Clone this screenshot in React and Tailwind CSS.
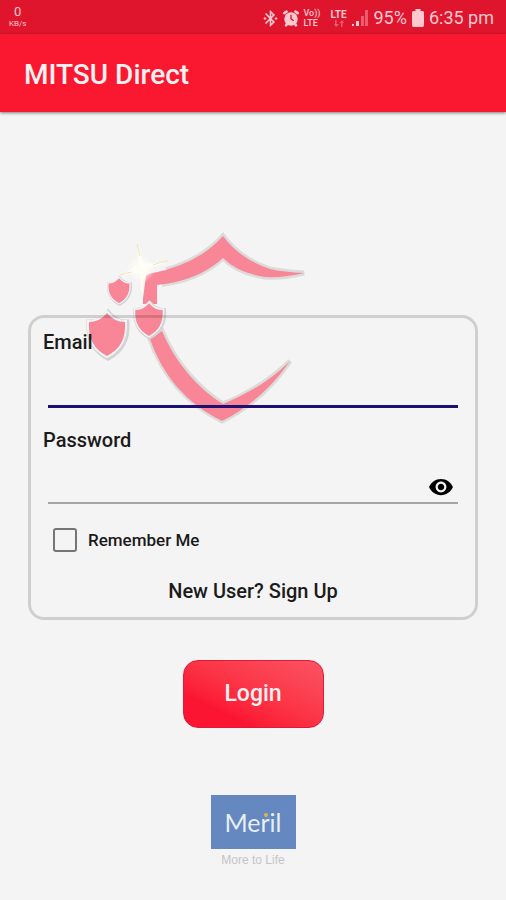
import { MdBluetoothConnected, MdVisibility } from "react-icons/md";

const SHIELD = "M0 -22 C5 -16 11 -13 18 -13 C19 4 13 14 0 21 C-13 14 -19 4 -18 -13 C-11 -13 -5 -16 0 -22Z";

const WING_TOP =
  "M143 304 L143 281 Q144 274 153 273 Q198 264 223 236 Q240 259 270 269 Q284 272 304 273 Q284 278 265 277 Q238 273 223 258 Q198 281 157 285 L157 304Z";
const WING_BOTTOM =
  "M150 339 C163 376 186 403 222 421 C246 409 270 390 290 361 C269 382 247 394 223 404 C199 389 176 364 162 331Z";

function SmallShield({ transform }) {
  return (
    <g transform={transform}>
      <path d={SHIELD} transform="translate(1 1)" fill="#d3d3d3" stroke="#d3d3d3" strokeWidth="7" strokeMiterlimit="3" />
      <path d={SHIELD} fill="#f4f4f4" stroke="#f4f4f4" strokeWidth="4" />
      <path d={SHIELD} fill="#f98697" />
    </g>
  );
}

function Emblem() {
  return (
    <svg
      viewBox="75 220 240 215"
      aria-hidden="true"
      className="pointer-events-none absolute top-[-95px] left-[75px] h-[215px] w-[240px]"
    >
      <defs>
        <radialGradient id="glow">
          <stop offset="0" stopColor="#fffef6" />
          <stop offset="0.5" stopColor="#fffef6" stopOpacity="0.6" />
          <stop offset="1" stopColor="#fffef6" stopOpacity="0" />
        </radialGradient>
      </defs>
      <g fill="#dbdbd9" stroke="#dbdbd9" strokeWidth="5" strokeLinejoin="miter" strokeMiterlimit="4">
        <path d={WING_TOP} />
        <path d={WING_BOTTOM} />
      </g>
      <path d="M136 308 L137 272 Q150 266 166 268 L162 286 L161 308Z" fill="#f4f4f4" />
      <g fill="#f98697">
        <path d={WING_TOP} />
        <path d={WING_BOTTOM} />
      </g>
      <SmallShield transform="translate(119 291) scale(0.58)" />
      <SmallShield transform="translate(107 335)" />
      <SmallShield transform="translate(149 320) scale(0.76)" />
      <circle cx="141" cy="269" r="14" fill="url(#glow)" />
      <path
        d="M137 244 Q141 256 144 264 Q156 263 169 261 Q156 266 147 270 Q145 282 143 299 Q140 284 140 273 Q130 274 119 275 Q130 270 138 266 Q138 256 137 244Z"
        fill="#fffef4"
        fillOpacity="0.9"
      />
      <path d="M137 244 Q138 250 140 256 M168 261 Q160 262 153 265 M120 275 Q125 273 132 272" fill="none" stroke="#f1e4ba" strokeWidth="1" />
    </svg>
  );
}

function StatusBar() {
  return (
    <div className="flex h-[34px] items-center bg-[#df152e] pr-3 pl-[9px] text-[#ffc9cf]">
      <div className="flex flex-col items-center">
        <span className="text-[13px] leading-[14px]">0</span>
        <span className="text-[8px] leading-[10px]">KB/s</span>
      </div>
      <div className="ml-auto flex items-center pt-[2px]">
        <MdBluetoothConnected className="size-[19px]" />
        <svg viewBox="0 0 20 20" className="ml-[2px] size-[18px]" aria-hidden="true">
          <circle cx="10" cy="11" r="7.5" fill="currentColor" />
          <path d="M2.500 4.500L5 3M17.500 4.500L15 3M4.500 18L6 16M15.500 18L14 16" stroke="currentColor" strokeWidth="3" strokeLinecap="round" />
          <path d="M10 6.500V11L13 13" fill="none" stroke="#df152e" strokeWidth="1.500" />
        </svg>
        <div className="ml-1 flex w-[20px] flex-col text-[9px] leading-[10px] font-medium">
          <span>Vo))</span>
          <span>LTE</span>
        </div>
        <div className="ml-[5px] flex w-[20px] flex-col items-center text-[10px] leading-[11px] font-bold">
          <span>LTE</span>
          <svg viewBox="0 0 10 7" className="h-[7px] w-[10px] opacity-40" aria-hidden="true">
            <path d="M2.500 0V4H5L2 7L0 4H1V0ZM7 7V3H5.500L8 0L10 3H8.500V7Z" fill="currentColor" />
          </svg>
        </div>
        <svg viewBox="0 0 18 18" className="ml-[2px] size-[18px]" aria-hidden="true">
          <path d="M1 15h2v2H1zM5 12h3v5H5z" fill="currentColor" />
          <path d="M10 7h3v10h-3zM14 1h3v16h-3z" fill="currentColor" opacity="0.4" />
        </svg>
        <span className="ml-[5px] text-[18px] leading-[20px]">95%</span>
        <svg viewBox="0 0 12 18" className="mx-[5px] h-[18px] w-[12px]" aria-hidden="true">
          <path d="M3.500 0H8.500V2H10.500Q12 2 12 3.500V16Q12 18 10.500 18H1.500Q0 18 0 16V3.500Q0 2 1.500 2H3.500Z" fill="currentColor" />
        </svg>
        <span className="text-[18px] leading-[20px]">6:35 pm</span>
      </div>
    </div>
  );
}

export default function App() {
  return (
    <div className="min-h-screen bg-[#f4f4f4] font-[Roboto,'Liberation_Sans',sans-serif] text-[#1b1b1b]">
      <StatusBar />
      <header className="flex h-[78px] items-center bg-[#fa1831] px-6 pt-1 shadow-[0_1px_3px_rgba(0,0,0,0.5)]">
        <h1 className="text-[28px] leading-[32px] font-medium text-[#fff1f2]">MITSU Direct</h1>
      </header>

      <main className="flex flex-col items-center pt-[203px] pb-8">
        <form className="flex w-full flex-col items-center" onSubmit={(e) => e.preventDefault()}>
          <div className="relative w-full px-7">
            <Emblem />
            <div className="relative rounded-[16px] border-[3px] border-black/15 px-3 pt-3 pb-[14px]">
              <label htmlFor="email" className="block text-[20px] leading-[24px] font-medium">
                Email
              </label>
              <div className="mx-[5px]">
                <input
                  id="email"
                  type="email"
                  className="block h-[54px] w-full border-b-[3px] border-[#1e1070] bg-transparent px-1 text-[20px] outline-none"
                />
              </div>

              <label htmlFor="password" className="mt-5 block text-[20px] leading-[24px] font-medium">
                Password
              </label>
              <div className="mx-[5px] flex h-[52px] items-end border-b-2 border-[#a5a5a5]">
                <input
                  id="password"
                  type="password"
                  className="h-full min-w-0 flex-1 bg-transparent px-1 text-[20px] outline-none"
                />
                <button type="button" aria-label="Show password" className="mr-1 mb-[2px] text-black">
                  <MdVisibility className="size-[26px]" />
                </button>
              </div>

              <label htmlFor="remember" className="mt-6 ml-[10px] flex w-fit items-center gap-[11px] text-[17px] leading-[24px] font-medium">
                <input
                  id="remember"
                  type="checkbox"
                  className="size-6 appearance-none rounded-[3px] border-2 border-[#757575] checked:bg-[#fa1831]"
                />
                Remember Me
              </label>

              <a href="#signup" className="mx-auto mt-[27px] block w-fit text-[20px] leading-[24px] font-medium">
                New User? Sign Up
              </a>
            </div>
          </div>

          <button
            type="submit"
            className="mt-10 h-[68px] w-[141px] rounded-[15px] border border-[#dd1b3c] bg-linear-to-tr from-[#fb1532] from-25% to-[#fb5263] text-[23px] leading-[28px] font-medium text-[#fff1f2]"
          >
            Login
          </button>
        </form>

        <footer className="mt-[67px] flex flex-col items-center">
          <div className="relative flex h-[54px] w-[85px] items-center justify-center bg-[#6488bf] font-[Lato,sans-serif] text-[25px] leading-[30px] text-[#e9eff8]">
            Meril
            <span className="absolute top-[18px] left-[53px] size-[4px] rounded-full bg-[#d9b64f]" />
          </div>
          <p className="mt-[3px] font-['Liberation_Sans',sans-serif] text-[12px] leading-[16px] text-[#c4c4c4]">More to Life</p>
        </footer>
      </main>
    </div>
  );
}
